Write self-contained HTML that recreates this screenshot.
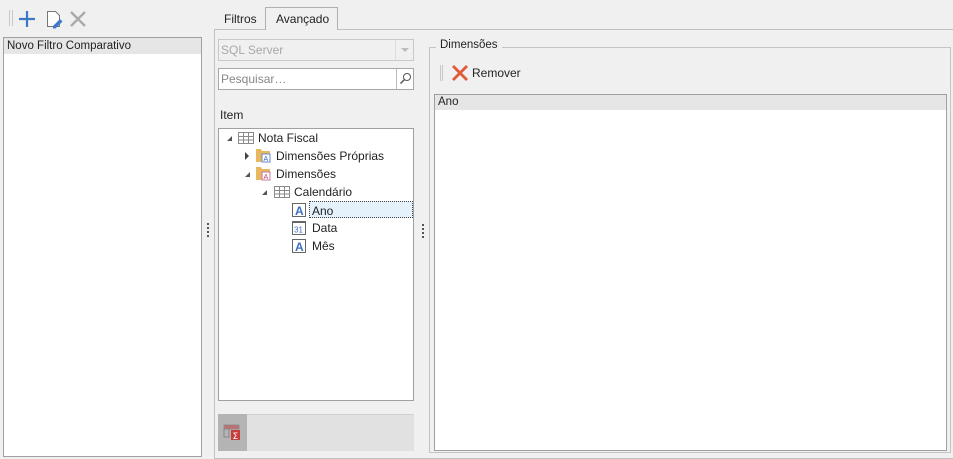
<!DOCTYPE html>
<html><head><meta charset="utf-8"><style>
*{box-sizing:border-box;margin:0;padding:0}
body{width:953px;height:454px;background:#f0f0f0;font-family:"Liberation Sans",sans-serif;font-size:12px;color:#222;position:relative;overflow:hidden}
.a{position:absolute}
.t{white-space:nowrap}
</style></head><body>
<!-- toolbar -->
<div class="a" style="left:9px;top:10px;width:1px;height:16px;background:#c8c8c8"></div>
<div class="a" style="left:12px;top:10px;width:1px;height:16px;background:#c8c8c8"></div>
<svg class="a" style="left:18px;top:9px" width="80" height="20">
<path d="M9 2v16M1 10h16" stroke="#3c78c8" stroke-width="2.2"/>
<path d="M29.5 2.5h8l4 4v11h-12z" fill="#fff" stroke="#777"/>
<path d="M35 17l7-7 2.5 2.5-7 7h-2.5z" fill="#3c78c8"/>
<path d="M53 3l14 14M67 3L53 17" stroke="#aaa" stroke-width="2.4"/>
</svg>
<!-- left list -->
<div class="a" style="left:3px;top:37px;width:199px;height:420px;background:#fff;border:1px solid #a0a0a0"></div>
<div class="a t" style="left:4px;top:38px;width:197px;height:16px;background:#e6e6e6;padding:2px 3px;font-size:11.5px">Novo Filtro Comparativo</div>
<div class="a" style="left:207px;top:223px;width:2px;height:14px;background:repeating-linear-gradient(#555 0 2px,transparent 2px 4px)"></div>
<!-- tabs -->
<div class="a t" style="left:224px;top:12px;font-size:12px">Filtros</div>
<div class="a t" style="left:265px;top:7px;width:73px;height:23px;border:1px solid #b0b0b0;border-bottom:none;background:#f0f0f0;padding:4px 0 0 10px;z-index:2">Avançado</div>
<div class="a" style="left:214px;top:29px;width:740px;height:430px;border:1px solid #c0c0c0"></div>
<!-- combo -->
<div class="a t" style="left:218px;top:39px;width:196px;height:22px;border:1px solid #c8c8c8;color:#a8a8a8;padding:3px 2px">SQL Server</div>
<div class="a" style="left:395px;top:40px;width:1px;height:20px;background:#ddd"></div>
<div class="a" style="left:401px;top:48px;border:4px solid transparent;border-top:4px solid #bbb"></div>
<!-- search -->
<div class="a t" style="left:218px;top:68px;width:196px;height:22px;border:1px solid #a8a8a8;background:#fff;color:#888;padding:3px 2px">Pesquisar…</div>
<div class="a" style="left:396px;top:69px;width:1px;height:20px;background:#bbb"></div>
<svg class="a" style="left:399px;top:72px" width="13" height="13"><circle cx="8" cy="5" r="3.5" fill="none" stroke="#555"/><path d="M5.5 7.5L1.5 11.5" stroke="#555" stroke-width="1.5"/></svg>
<div class="a t" style="left:220px;top:108px">Item</div>
<!-- tree -->
<div class="a" style="left:218px;top:128px;width:196px;height:273px;border:1px solid #a0a0a0;background:#fff"></div>
<svg class="a" style="left:219px;top:129px" width="194" height="130">
<g fill="#555"><path d="M8 12l5 0 0-5z"/><path d="M26 23l0 8 4-4z" fill="#444"/><path d="M26 48l5 0 0-5z"/><path d="M43 66l5 0 0-5z"/></g>
<g fill="none" stroke="#8a8a8a"><rect x="19.5" y="3.5" width="15" height="11"/><path d="M19.5 7.5h15M19.5 11h15M24.5 3.5v11M29.5 3.5v11"/>
<rect x="55.5" y="57.5" width="15" height="11"/><path d="M55.5 61.5h15M55.5 65h15M60.5 57.5v11M65.5 57.5v11"/></g>
<g><path d="M37 20h5l1 2h8v11h-14z" fill="#e8b860"/><rect x="43" y="25" width="8" height="8" fill="#fff" stroke="#6a8ac8"/><text x="44.5" y="32" font-size="7" fill="#3c64b4" font-family="Liberation Sans">A</text>
<path d="M37 38h5l1 2h8v11h-14z" fill="#e8b860"/><rect x="43" y="43" width="8" height="8" fill="#fff" stroke="#c87aa0"/><text x="44.5" y="50" font-size="7" fill="#c04070" font-family="Liberation Sans">A</text></g>
<g><rect x="73.5" y="74.5" width="13" height="13" fill="#fff" stroke="#666"/><text x="76" y="86" font-size="12" font-weight="bold" fill="#3c6ec0" font-family="Liberation Sans">A</text>
<rect x="73.5" y="92.5" width="13" height="13" fill="#fff" stroke="#666"/><rect x="73" y="92" width="14" height="2" fill="#666"/><text x="75" y="103.5" font-size="8" fill="#3c6ec0" font-family="Liberation Sans">31</text>
<rect x="73.5" y="110.5" width="13" height="13" fill="#fff" stroke="#666"/><text x="76" y="122" font-size="12" font-weight="bold" fill="#3c6ec0" font-family="Liberation Sans">A</text></g>
</svg>
<div class="a t" style="left:258px;top:131px">Nota Fiscal</div>
<div class="a t" style="left:276px;top:149px">Dimensões Próprias</div>
<div class="a t" style="left:276px;top:167px">Dimensões</div>
<div class="a t" style="left:294px;top:185px">Calendário</div>
<div class="a t" style="left:309px;top:201px;width:104px;height:17px;background:#e5f1fb;border:1px dotted #444;padding:2px 0 0 2px">Ano</div>
<div class="a t" style="left:312px;top:221px">Data</div>
<div class="a t" style="left:312px;top:239px">Mês</div>
<!-- bottom bar -->
<div class="a" style="left:218px;top:414px;width:196px;height:37px;background:#e1e1e1;border-top:1px solid #d0d0d0"></div>
<div class="a" style="left:218px;top:414px;width:29px;height:37px;background:#b4b4b4"></div>
<svg class="a" style="left:223px;top:424px" width="18" height="18"><rect x="1" y="1" width="15" height="4" fill="#c07070" stroke="#888" stroke-width=".8"/><rect x="1" y="5" width="5" height="8" fill="none" stroke="#888"/><rect x="8" y="6" width="9" height="10" fill="#c83c3c"/><text x="9.5" y="15" font-size="9" fill="#fff" font-family="DejaVu Sans">Σ</text></svg>
<div class="a" style="left:422px;top:224px;width:2px;height:14px;background:repeating-linear-gradient(#555 0 2px,transparent 2px 4px)"></div>
<!-- group -->
<div class="a" style="left:429px;top:47px;width:522px;height:406px;border:1px solid #c4c4c4"></div>
<div class="a t" style="left:436px;top:39px;background:#f0f0f0;padding:0 4px;font-size:11.5px">Dimensões</div>
<div class="a" style="left:440px;top:65px;width:1px;height:16px;background:#c8c8c8"></div>
<div class="a" style="left:442px;top:65px;width:1px;height:16px;background:#c8c8c8"></div>
<svg class="a" style="left:451px;top:64px" width="18" height="18"><path d="M2 2l14 14M16 2L2 16" stroke="#e05a3a" stroke-width="2.8"/></svg>
<div class="a t" style="left:472px;top:66px">Remover</div>
<div class="a" style="left:434px;top:94px;width:513px;height:357px;border:1px solid #a0a0a0;background:#fff"></div>
<div class="a t" style="left:435px;top:95px;width:511px;height:15px;background:#e6e6e6;padding:1px 3px;font-size:11.5px">Ano</div>
</body></html>
